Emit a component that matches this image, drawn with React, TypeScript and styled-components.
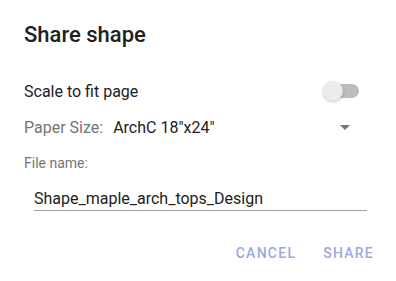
import React from "react";
import styled, { createGlobalStyle } from "styled-components";

const Global = createGlobalStyle`
  html, body { margin: 0; padding: 0; background: #ffffff; }
  body { font-family: Roboto, "Noto Sans", Arial, sans-serif; }
  * { box-sizing: border-box; }
`;

const Dialog = styled.div`
  width: 396px;
  height: 281px;
  padding: 23px 24px 0 24px;
  display: flex;
  flex-direction: column;
  background: #ffffff;
`;

const Title = styled.h2`
  margin: 0;
  font-size: 22px;
  line-height: 24px;
  font-weight: 500;
  color: #212121;
`;

const Row = styled.div<{ $top: number }>`
  margin-top: ${(p) => p.$top}px;
  display: flex;
  align-items: center;
  height: 20px;
`;

const Label = styled.span<{ $muted?: boolean; $size?: number }>`
  font-size: ${(p) => p.$size ?? 16}px;
  line-height: 20px;
  padding-top: 1px;
  color: ${(p) => (p.$muted ? "#757575" : "#212121")};
`;

const Value = styled.span`
  font-size: 16px;
  line-height: 20px;
  padding-top: 1px;
  color: #212121;
  margin-left: 10px;
  flex: 1;
`;

const Spacer = styled.div`
  flex: 1;
`;

const Switch = styled.div`
  position: relative;
  width: 36px;
  height: 20px;
  margin-right: 13px;
`;

const Track = styled.div`
  position: absolute;
  left: 1px;
  top: 3px;
  width: 35px;
  height: 14px;
  border-radius: 7px;
  background: #bdbdbd;
`;

const Thumb = styled.div`
  position: absolute;
  left: 0;
  top: 0;
  width: 20px;
  height: 20px;
  border-radius: 50%;
  background: #ececec;
  box-shadow: 0 1px 3px rgba(0, 0, 0, 0.25);
`;

const Caret = styled.div`
  width: 0;
  height: 0;
  border-left: 5px solid transparent;
  border-right: 5px solid transparent;
  border-top: 5px solid #757575;
  margin-right: 22px;
  margin-top: 1px;
`;

const Field = styled.div`
  margin-top: 15px;
  display: flex;
  flex-direction: column;
`;

const Input = styled.input`
  margin: 15px 5px 0 10px;
  padding: 0 0 2px 0;
  border: none;
  border-bottom: 1px solid #a0a0a0;
  font-family: Roboto, "Noto Sans", Arial, sans-serif;
  font-size: 16px;
  line-height: 20px;
  height: 23px;
  color: #212121;
  background: transparent;
  outline: none;
`;

const Actions = styled.div`
  margin-top: 32px;
  margin-right: -2px;
  display: flex;
  justify-content: flex-end;
  gap: 27px;
`;

const TextButton = styled.button`
  border: none;
  background: transparent;
  padding: 0;
  font-family: Roboto, "Noto Sans", Arial, sans-serif;
  font-size: 14px;
  font-weight: 500;
  line-height: 20px;
  letter-spacing: 1.25px;
  color: #9fa8da;
  cursor: pointer;
`;

export default function App() {
  return (
    <>
      <Global />
      <Dialog>
        <Title>Share shape</Title>
        <Row $top={34}>
          <Label>Scale to fit page</Label>
          <Spacer />
          <Switch>
            <Track />
            <Thumb />
          </Switch>
        </Row>
        <Row $top={16}>
          <Label $muted>Paper Size:</Label>
          <Value>ArchC 18"x24"</Value>
          <Caret />
        </Row>
        <Field>
          <Label $muted $size={14}>File name:</Label>
          <Input defaultValue="Shape_maple_arch_tops_Design" />
        </Field>
        <Actions>
          <TextButton>CANCEL</TextButton>
          <TextButton>SHARE</TextButton>
        </Actions>
      </Dialog>
    </>
  );
}
